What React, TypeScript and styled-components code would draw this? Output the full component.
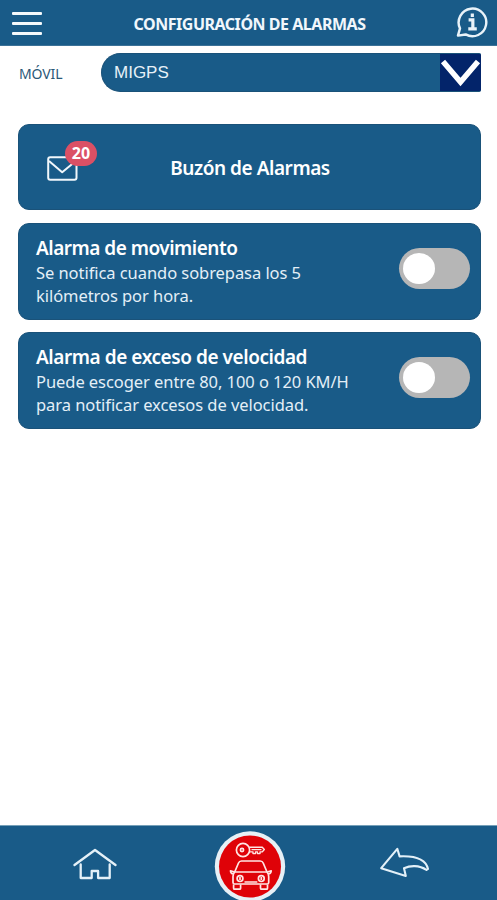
import React, { useState } from 'react';
import styled, { createGlobalStyle } from 'styled-components';

const blue = '#195b88';
const edge = '#1a5279';

const GlobalStyle = createGlobalStyle`
  * { box-sizing: border-box; }
  body { margin: 0; background: #fff; font-family: 'Noto Sans', 'Open Sans', sans-serif; }
  button { font: inherit; color: inherit; border: 0; padding: 0; background: none; }
  svg { display: block; }
`;

const Screen = styled.div`
  display: flex;
  flex-direction: column;
  width: 100%;
  height: 900px;
  overflow: hidden;
`;

const Header = styled.header`
  display: grid;
  grid-template-columns: 42px 1fr 42px;
  align-items: center;
  height: 46px;
  padding-bottom: 1px;
  background: ${blue};
  border-bottom: 1px solid #3c7298;
`;

const MenuButton = styled.button`
  display: flex;
  flex-direction: column;
  gap: 7px;
  padding-left: 12px;
  margin-top: 2px;
`;

const MenuLine = styled.span`
  height: 3px;
  border-radius: 1px;
  background: #f4f9fc;
`;

const Title = styled.h1`
  margin: 3px 0 0 2px;
  text-align: center;
  white-space: nowrap;
  color: #f1f7fc;
  font-size: 16px;
  font-weight: 700;
  line-height: 22px;
  letter-spacing: -0.47px;
`;

const DeviceRow = styled.div`
  display: flex;
  align-items: center;
  height: 39px;
  margin: 7px 16px 0 18px;
`;

const DeviceLabel = styled.span`
  width: 83px;
  padding: 3px 0 0 1px;
  color: #2b5877;
  font-size: 14px;
  line-height: 20px;
  letter-spacing: -0.1px;
`;

const DeviceSelect = styled.button`
  display: flex;
  align-items: center;
  justify-content: space-between;
  flex: 1;
  height: 39px;
  padding-left: 12px;
  overflow: hidden;
  color: #e7f1f8;
  background: ${blue};
  border: 1px solid ${edge};
  border-right: 0;
  border-radius: 20px 2px 2px 20px;
  font-family: 'Liberation Sans', Arial, sans-serif;
  font-size: 17px;
`;

const Arrow = styled.span`
  width: 41px;
  height: 37px;
  background: #03246a;
`;

const CardList = styled.main`
  display: flex;
  flex-direction: column;
  gap: 13px;
  flex: 1;
  margin: 32px 16px 0 18px;
`;

const Card = styled.section<{ $height: number }>`
  display: flex;
  align-items: center;
  height: ${({ $height }) => $height}px;
  flex: none;
  color: #fff;
  background: ${blue};
  border: 1px solid ${edge};
  border-radius: 11px;
`;

const AlarmCard = styled(Card)`
  align-items: flex-start;
  justify-content: space-between;
  padding: 12px 10px 0 17px;
  & + & { margin-top: -1px; }
`;

const MailIcon = styled.div`
  position: relative;
  width: 31px;
  height: 25px;
  margin: 3px 0 0 28px;
`;

const Badge = styled.span`
  position: absolute;
  left: 18px;
  top: -15px;
  width: 32px;
  height: 25px;
  border-radius: 13px;
  background: #db5065;
  font-size: 16px;
  font-weight: 700;
  line-height: 24px;
  text-align: center;
`;

const InboxTitle = styled.h2`
  flex: 1;
  margin: 2px 58px 0 0;
  text-align: center;
  font-size: 19px;
  font-weight: 600;
  line-height: 26px;
  letter-spacing: -0.45px;
`;

const AlarmTitle = styled.h2<{ $spacing: number }>`
  margin: 0;
  font-size: 19px;
  font-weight: 600;
  line-height: 25px;
  white-space: nowrap;
  letter-spacing: ${({ $spacing }) => $spacing}px;
`;

const Description = styled.p`
  margin: 0;
  color: #e4eff7;
  font-size: 16.5px;
  line-height: 23.3px;
  letter-spacing: -0.06px;
  white-space: pre-line;
`;

const Switch = styled.button<{ $on: boolean }>`
  display: flex;
  justify-content: ${({ $on }) => ($on ? 'flex-end' : 'flex-start')};
  width: 71px;
  height: 41px;
  margin-top: 12px;
  padding: 5px 5px 5px 4px;
  border-radius: 21px;
  background: ${({ $on }) => ($on ? '#4caf50' : '#b6b6b6')};
  flex: none;
`;

const Knob = styled.span`
  width: 32px;
  height: 31px;
  border-radius: 50%;
  background: #fff;
`;

const Footer = styled.footer`
  display: grid;
  grid-template-columns: 190px 119px 1fr;
  justify-items: center;
  height: 75px;
  background: ${blue};
  border-top: 1px solid #76a0b8;
`;

const HomeButton = styled.button`
  align-self: start;
  margin-top: 22px;
`;

const VehicleButton = styled.button`
  align-self: start;
  margin-top: 5px;
`;

const BackButton = styled.button`
  align-self: start;
  margin-top: 21px;
  margin-left: 3px;
`;

const alarms = [
  { title: 'Alarma de movimiento', text: 'Se notifica cuando sobrepasa los 5\nkilómetros por hora.', spacing: -0.5 },
  { title: 'Alarma de exceso de velocidad', text: 'Puede escoger entre 80, 100 o 120 KM/H\npara notificar excesos de velocidad.', spacing: -0.44 },
];

function AlarmSetting({ title, text, spacing }: { title: string; text: string; spacing: number }) {
  const [on, setOn] = useState(false);
  return (
    <AlarmCard $height={97}>
      <div>
        <AlarmTitle $spacing={spacing}>{title}</AlarmTitle>
        <Description>{text}</Description>
      </div>
      <Switch $on={on} role="switch" aria-checked={on} aria-label={title} onClick={() => setOn(!on)}>
        <Knob />
      </Switch>
    </AlarmCard>
  );
}

const InfoIcon = () => (
  <svg width="34" height="34" viewBox="0 0 32 32" fill="none" stroke="#e9f3f9" strokeWidth="2.3">
    <path d="M4.7 22A13 13 0 1 1 10 27.7L2.8 28.8Z" strokeLinejoin="round" />
    <path d="M16.3 8.1v3.2M12.8 14h4v8M12.5 22.5h8" strokeWidth="3" />
  </svg>
);

const EnvelopeIcon = () => (
  <svg width="31" height="25" viewBox="0 0 31 25" fill="none" stroke="#f1f7fb" strokeWidth="2" strokeLinejoin="round">
    <rect x="1.2" y="1.2" width="28.3" height="22.5" rx="2" />
    <path d="M2 5l13.2 11.2L28.8 5" />
  </svg>
);

const HomeIcon = () => (
  <svg width="44" height="34" viewBox="0 0 44 34" fill="none" stroke="#e5f1f8" strokeWidth="2.3" strokeLinecap="round" strokeLinejoin="round">
    <path d="M1.5 17L22 2 42.5 17" />
    <path d="M7.7 16.5v13.5h11v-7h6.4v7h11.6V16.5" />
  </svg>
);

const VehicleIcon = () => (
  <svg width="72" height="70" viewBox="0 0 72 70" fill="none" stroke="#ffe6e4" strokeWidth="1.7" strokeLinejoin="round">
    <circle cx="36" cy="35.5" r="35.2" fill="#e7f0f6" stroke="none" />
    <circle cx="36" cy="35.5" r="31" fill="#df0208" stroke="none" />
    <circle cx="29" cy="19" r="6.6" />
    <circle cx="28" cy="19" r="1.6" />
    <path d="M35.3 16.3h13l2 2.2-2 2.4h-2.3v1.7h-2.5v-1.7h-2v1.7H39v-1.7h-3.7M37.5 18.6h10" strokeWidth="1.4" />
    <path d="M20.7 41l3.8-9q.8-2 3-2h18.7q2.2 0 3 2l3.8 9" />
    <path d="M20.7 41h32.3q1.7 2 1.7 4.5v6q0 1.5-1.5 1.5H20.5q-1.5 0-1.5-1.5v-6Q19 43 20.7 41ZM20.5 41l-4-1.2q0 2.8 3 3.4M53.2 41l4-1.2q0 2.8-3 3.4" />
    <circle cx="26" cy="47.6" r="2.9" />
    <circle cx="47.3" cy="47.6" r="2.9" />
    <path d="M26 46v3M47.3 46v3M30.5 51h12.8M19.6 53.5v3.7q0 1 1 1h5q1 0 1-1v-3.7M46.5 53.5v3.7q0 1 1 1h5q1 0 1-1v-3.7" />
  </svg>
);

const BackIcon = () => (
  <svg width="50" height="34" viewBox="0 0 50 34" fill="none" stroke="#e3f0f8" strokeWidth="2.1" strokeLinejoin="round">
    <path d="M1.2 21.2L17.3 1.8l2.3 7.6C32 8.8 45.5 10.8 48 22L46.5 23C39 17.8 30 18.5 24 21.2L25.8 29Z" />
  </svg>
);

export default function App() {
  return (
    <>
      <GlobalStyle />
      <Screen>
        <Header>
          <MenuButton aria-label="Menú"><MenuLine /><MenuLine /><MenuLine /></MenuButton>
          <Title>CONFIGURACIÓN DE ALARMAS</Title>
          <InfoIcon />
        </Header>
        <DeviceRow>
          <DeviceLabel>MÓVIL</DeviceLabel>
          <DeviceSelect>
            <span>MIGPS</span>
            <Arrow>
              <svg width="41" height="37" viewBox="0 0 41 37" fill="none" stroke="#fff" strokeWidth="5.5">
                <path d="M3 7.5L20.5 28L38 7.5" />
              </svg>
            </Arrow>
          </DeviceSelect>
        </DeviceRow>
        <CardList>
          <Card $height={86}>
            <MailIcon><EnvelopeIcon /><Badge>20</Badge></MailIcon>
            <InboxTitle>Buzón de Alarmas</InboxTitle>
          </Card>
          {alarms.map((alarm) => <AlarmSetting key={alarm.title} {...alarm} />)}
        </CardList>
        <Footer>
          <HomeButton aria-label="Inicio"><HomeIcon /></HomeButton>
          <VehicleButton aria-label="Vehículo"><VehicleIcon /></VehicleButton>
          <BackButton aria-label="Volver"><BackIcon /></BackButton>
        </Footer>
      </Screen>
    </>
  );
}
